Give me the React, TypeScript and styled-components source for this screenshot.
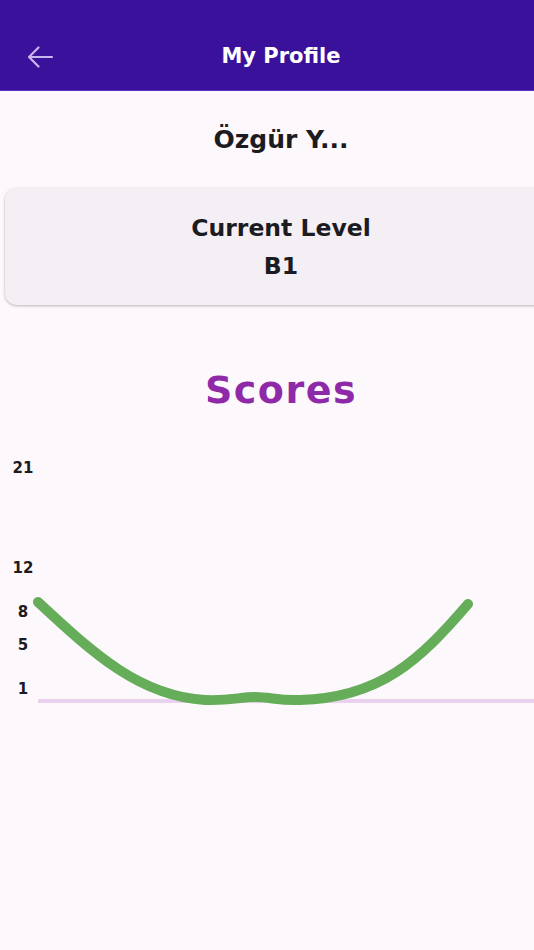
import React from "react";
import styled, { createGlobalStyle } from "styled-components";

const GlobalStyle = createGlobalStyle`
  body {
    margin: 0;
    overflow-x: hidden;
    background: #fdf8fc;
    font-family: "DejaVu Sans", "Noto Sans", sans-serif;
  }
`;

const scoreLabels = [
  { value: "21", y: 473 },
  { value: "12", y: 573 },
  { value: "8", y: 617 },
  { value: "5", y: 650 },
  { value: "1", y: 694 },
];

const CHART_TOP = 450;

const BackIcon = () => (
  <svg width="26" height="22" viewBox="0 0 26 22" fill="none">
    <path
      d="M25 11H2M11.5 1.5L2 11l9.5 9.5"
      stroke="#c7b5ec"
      strokeWidth="2.2"
      strokeLinecap="round"
      strokeLinejoin="round"
    />
  </svg>
);

const ScoreChart = () => {
  const t = (y: number) => y - CHART_TOP;
  return (
    <ChartBox width="562" height="290" viewBox="0 0 562 290">
      <line x1="38" y1={t(701)} x2="562" y2={t(701)} stroke="#ead2ef" strokeWidth="4" />
      <path
        d={`M38 ${t(602)}
            C 95 ${t(655)}, 140 ${t(696)}, 205 ${t(700)}
            C 230 ${t(701)}, 240 ${t(697)}, 255 ${t(697)}
            C 270 ${t(697)}, 280 ${t(701)}, 300 ${t(700)}
            C 380 ${t(698)}, 420 ${t(660)}, 468 ${t(604)}`}
        stroke="#66ad5a"
        strokeWidth="10"
        strokeLinecap="round"
        fill="none"
      />
      {scoreLabels.map((l) => (
        <AxisText key={l.value} x="23" y={t(l.y)} textAnchor="middle">
          {l.value}
        </AxisText>
      ))}
    </ChartBox>
  );
};

const App = () => {
  return (
    <>
      <GlobalStyle />
      <Page>
        <Header>
          <BackButton>
            <BackIcon />
          </BackButton>
          <Title>My Profile</Title>
        </Header>
        <Name>Özgür Y...</Name>
        <LevelCard>
          <LevelLabel>Current Level</LevelLabel>
          <LevelValue>B1</LevelValue>
        </LevelCard>
        <ScoresTitle>Scores</ScoresTitle>
        <ScoreChart />
      </Page>
    </>
  );
};

const Page = styled.div`
  width: 562px;
  min-height: 950px;
  background: #fdf8fc;
  display: flex;
  flex-direction: column;
  color: #1c1b1f;
`;

const Header = styled.header`
  position: relative;
  display: flex;
  align-items: center;
  justify-content: center;
  height: 91px;
  padding-top: 22px;
  box-sizing: border-box;
  background: #3a119a;
  border-bottom: 1px solid #5a33c4;
`;

const BackButton = styled.div`
  position: absolute;
  left: 27px;
  top: 46px;
  display: flex;
`;

const Title = styled.h1`
  margin: 0;
  color: #ffffff;
  font-size: 21px;
  font-weight: 700;
  line-height: 28px;
`;

const Name = styled.div`
  margin-top: 32px;
  text-align: center;
  font-size: 25px;
  font-weight: 700;
  line-height: 34px;
`;

const LevelCard = styled.div`
  margin: 31px 5px 0;
  height: 117px;
  border-radius: 12px;
  background: #f3eff4;
  box-shadow: 0 1px 3px rgba(0, 0, 0, 0.28);
  display: flex;
  flex-direction: column;
  align-items: center;
  justify-content: center;
  gap: 4px;
`;

const LevelLabel = styled.div`
  font-size: 23.5px;
  font-weight: 700;
  line-height: 34px;
`;

const LevelValue = styled.div`
  font-size: 23.5px;
  font-weight: 700;
  line-height: 34px;
`;

const ScoresTitle = styled.h2`
  margin: 60px 0 0;
  text-align: center;
  color: #8e2aa8;
  font-size: 38px;
  font-weight: 700;
  line-height: 50px;
  letter-spacing: 1.5px;
`;

const ChartBox = styled.svg`
  display: block;
  margin-top: 35px;
`;

const AxisText = styled.text`
  font-family: "DejaVu Sans", "Noto Sans", sans-serif;
  font-size: 15px;
  font-weight: 700;
  fill: #1c1b1f;
`;

export default App;
